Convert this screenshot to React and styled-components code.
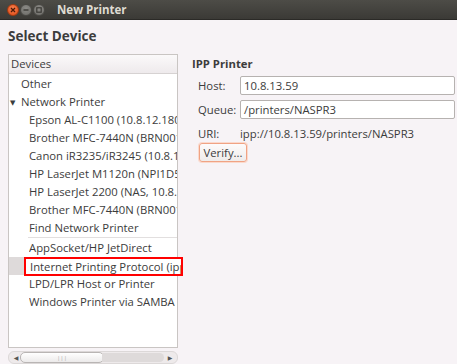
import styled, { createGlobalStyle } from "styled-components";

const Global = createGlobalStyle`
  html, body { margin: 0; padding: 0; }
  body {
    width: 457px;
    height: 364px;
    overflow: hidden;
    font-family: "Open Sans", "DejaVu Sans", sans-serif;
    font-size: 11.3px;
    color: #3c3c3c;
    background: #f6f3f5;
  }
`;

const Window = styled.div`
  display: flex;
  flex-direction: column;
  width: 457px;
  height: 364px;
  background: #f7f3f6;
`;

const TitleBar = styled.div`
  height: 19px;
  display: flex;
  align-items: center;
  padding-left: 7px;
  background: linear-gradient(#4d4c47, #3b3a36);
  border-bottom: 1px solid #2b2a27;
`;

const WinButton = styled.span`
  box-sizing: border-box;
  width: 12px;
  height: 12px;
  border-radius: 50%;
  margin-right: 1px;
  display: flex;
  align-items: center;
  justify-content: center;
  background: ${(p) =>
    p.close
      ? "radial-gradient(circle at 50% 35%, #f7804e, #df4a17)"
      : "radial-gradient(circle at 50% 35%, #8c8b87, #6b6a66)"};
  border: 1px solid ${(p) => (p.close ? "#a33a10" : "#4a4945")};
`;

const Title = styled.span`
  margin-left: 11px;
  font-weight: bold;
  font-size: 11.5px;
  color: #dfdbd2;
`;

const Body = styled.div`
  flex: 1;
  display: flex;
  flex-direction: column;
  padding: 0 2px 0 8px;
`;

const Heading = styled.h1`
  margin: 7px 0 8px;
  font-size: 13.5px;
  line-height: 19px;
  font-weight: bold;
  color: #3c3c3c;
`;

const Columns = styled.div`
  flex: 1;
  display: flex;
`;

const LeftCol = styled.div`
  width: 170px;
  display: flex;
  flex-direction: column;
`;

const ListBox = styled.div`
  height: 292px;
  border: 1px solid #c9c5c3;
  background: #fff;
  display: flex;
  flex-direction: column;
`;

const ListHeader = styled.div`
  height: 18px;
  line-height: 18px;
  padding-left: 2px;
  background: linear-gradient(#fbf9fa, #eeeaec);
  border-bottom: 1px solid #d6d2d2;
  margin-bottom: 1px;
`;

const Row = styled.div`
  height: 18px;
  display: flex;
  align-items: center;
  padding-left: ${(p) => p.indent}px;
  background: ${(p) => (p.selected ? "#dedada" : "transparent")};
  white-space: nowrap;
`;

const Label = styled.span`
  overflow: hidden;
  flex: 1;
  line-height: 16px;
`;

const Marked = styled.span`
  flex: 1;
  margin-left: -5px;
  margin-right: -6px;
  height: 15px;
  line-height: 15px;
  padding-left: 4px;
  border: 2px solid #f00;
  background: #fff;
  overflow: hidden;
`;

const Arrow = styled.span`
  width: 11px;
  margin-left: -11px;
  font-size: 7px;
  color: #3c3c3c;
`;

const Separator = styled.div`
  height: 1px;
  margin: 0 0 1px 19px;
  background: #e2dfdf;
`;

const ScrollBar = styled.div`
  margin-top: 3px;
  height: 11px;
  display: flex;
  align-items: center;
  border: 1px solid #dcd8d8;
  border-radius: 6px;
  background: #eeeaeb;
  padding: 0 3px;
`;

const ScrollArrow = styled.span`
  font-size: 6px;
  color: #555;
  width: 8px;
  text-align: center;
`;

const Thumb = styled.div`
  width: 82px;
  height: 9px;
  border: 1px solid #b9b5b4;
  border-radius: 5px;
  background: linear-gradient(#ffffff, #eceaea);
  display: flex;
  align-items: center;
  justify-content: center;
  font-size: 6px;
  color: #aaa;
`;

const Trough = styled.div`
  flex: 1;
  height: 9px;
  margin: 0 2px 0 -2px;
  border-radius: 0 5px 5px 0;
  background: #dedada;
`;

const RightCol = styled.div`
  flex: 1;
  margin-left: 14px;
  padding-top: 1px;
  display: flex;
  flex-direction: column;
`;

const Section = styled.div`
  font-weight: bold;
  line-height: 18px;
  margin-bottom: 3px;
`;

const Form = styled.div`
  display: grid;
  grid-template-columns: 42px 1fr;
  row-gap: 5px;
  padding-left: 6px;
  align-items: center;
`;

const FieldLabel = styled.span`
  line-height: 19px;
`;

const Input = styled.div`
  height: 17px;
  line-height: 17px;
  border: 1px solid #b6b2b0;
  border-radius: 2px;
  background: #fff;
  padding-left: 3px;
`;

const Value = styled.span`
  line-height: 16px;
`;

const Verify = styled.button`
  margin: 0 0 0 7px;
  width: 48px;
  height: 19px;
  padding: 0;
  border: 1px solid #f0a384;
  border-radius: 3px;
  background: linear-gradient(#fdfbfb, #efeceb);
  box-shadow: 0 0 0 1px #fbd9cc;
  font-family: inherit;
  font-size: 11.3px;
  color: #3c3c3c;
`;

const devices = [
  "Epson AL-C1100 (10.8.12.180)",
  "Brother MFC-7440N (BRN001BA98D)",
  "Canon iR3235/iR3245 (10.8.12.5)",
  "HP LaserJet M1120n (NPI1D5C6A)",
  "HP LaserJet 2200 (NAS, 10.8.13.59)",
  "Brother MFC-7440N (BRN001BA98E)",
  "Find Network Printer",
];

const protocols = [
  "AppSocket/HP JetDirect",
  "Internet Printing Protocol (ipp)",
  "LPD/LPR Host or Printer",
  "Windows Printer via SAMBA",
];

export default function App() {
  return (
    <Window>
      <Global />
      <TitleBar>
        <WinButton close>
          <svg width="6" height="6" viewBox="0 0 6 6">
            <path d="M1 1L5 5M5 1L1 5" stroke="#4a1a08" strokeWidth="1.3" />
          </svg>
        </WinButton>
        <WinButton>
          <svg width="6" height="6" viewBox="0 0 6 6">
            <path d="M0.5 3H5.5" stroke="#3b3a36" strokeWidth="1.4" />
          </svg>
        </WinButton>
        <WinButton>
          <svg width="6" height="6" viewBox="0 0 6 6">
            <rect x="0.8" y="0.8" width="4.4" height="4.4" fill="none" stroke="#3b3a36" strokeWidth="1.2" />
          </svg>
        </WinButton>
        <Title>New Printer</Title>
      </TitleBar>
      <Body>
        <Heading>Select Device</Heading>
        <Columns>
          <LeftCol>
            <ListBox>
              <ListHeader>Devices</ListHeader>
              <Row indent={12}>
                <Label>Other</Label>
              </Row>
              <Row indent={12}>
                <Arrow>▼</Arrow>
                <Label>Network Printer</Label>
              </Row>
              {devices.map((d) => (
                <Row key={d} indent={20}>
                  <Label>{d}</Label>
                </Row>
              ))}
              <Separator />
              {protocols.map((d, i) => (
                <Row key={d} indent={20} selected={i === 1}>
                  {i === 1 ? <Marked>{d}</Marked> : <Label>{d}</Label>}
                </Row>
              ))}
            </ListBox>
            <ScrollBar>
              <ScrollArrow>◀</ScrollArrow>
              <Thumb>|||</Thumb>
              <Trough />
              <ScrollArrow>▶</ScrollArrow>
            </ScrollBar>
          </LeftCol>
          <RightCol>
            <Section>IPP Printer</Section>
            <Form>
              <FieldLabel>Host:</FieldLabel>
              <Input>10.8.13.59</Input>
              <FieldLabel>Queue:</FieldLabel>
              <Input>/printers/NASPR3</Input>
              <FieldLabel>URI:</FieldLabel>
              <Value>ipp://10.8.13.59/printers/NASPR3</Value>
            </Form>
            <div>
              <Verify>Verify...</Verify>
            </div>
          </RightCol>
        </Columns>
      </Body>
    </Window>
  );
}
